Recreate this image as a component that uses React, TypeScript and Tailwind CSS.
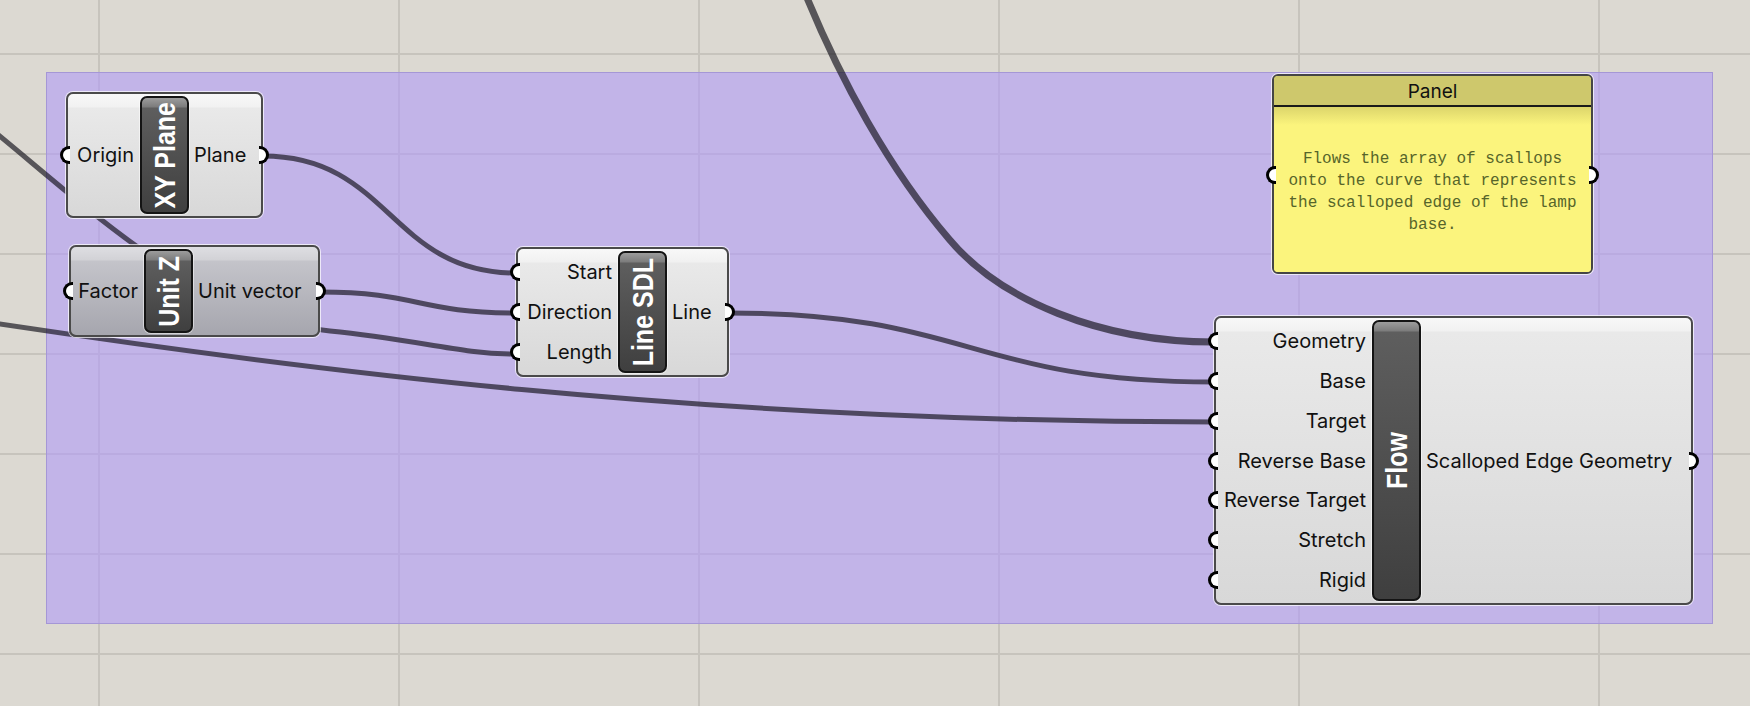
import React from "react"

type NodeProps = {
  x: number
  y: number
  w: number
  h: number
  leftW: number
  title: string
  inputs: string[]
  outputs: string[]
  dark?: boolean
}

const light =
  "bg-[linear-gradient(to_bottom,#f8f8f8_0px,#f1f1f1_13px,#e9e9e9_14px,#d8d8d8_100%)]"
const grey =
  "bg-[linear-gradient(to_bottom,#dedee2_0px,#d2d2d6_13px,#c4c4ca_14px,#a6a6ae_100%)]"

function InPort() {
  return (
    <span className="absolute right-full top-1/2 -translate-y-1/2 mr-[-2px] w-[10px] h-[18px] rounded-l-full border-[3px] border-r-0 border-black bg-white" />
  )
}

function OutPort() {
  return (
    <span className="absolute left-full top-1/2 -translate-y-1/2 ml-[-2px] w-[10px] h-[18px] rounded-r-full border-[3px] border-l-0 border-black bg-white" />
  )
}

function Node({ x, y, w, h, leftW, title, inputs, outputs, dark }: NodeProps) {
  return (
    <div
      className={`absolute flex rounded-[7px] border-2 border-[#4a4a4a] shadow-[0_0_0_1px_rgba(255,255,255,0.7)] ${dark ? grey : light}`}
      style={{ left: x, top: y, width: w, height: h }}
    >
      <div className="flex flex-col py-[3px]" style={{ width: leftW - 2 }}>
        {inputs.map((name) => (
          <div key={name} className="relative flex-1 flex items-center justify-end pr-[6px]">
            <InPort />
            <span className="text-[20px] leading-none text-[#111] whitespace-nowrap">{name}</span>
          </div>
        ))}
      </div>
      <div className="w-[49px] my-[2px] rounded-[7px] border-2 border-[#141414] shadow-[0_0_0_1px_rgba(255,255,255,0.5)] bg-[linear-gradient(to_bottom,#9c9c9c_0px,#7c7c7c_9px,#5e5e5e_10px,#3f3f3f_100%)] flex items-center justify-center overflow-hidden">
        <span className="[writing-mode:vertical-rl] rotate-180 scale-x-[1.18] font-['Liberation_Sans',Arial,sans-serif] font-bold text-[25px] leading-none text-white whitespace-nowrap">
          {title}
        </span>
      </div>
      <div className="flex-1 flex flex-col py-[3px]">
        {outputs.map((name) => (
          <div key={name} className="relative flex-1 flex items-center pl-[5px]">
            <span className="text-[20px] leading-none text-[#111] whitespace-nowrap">{name}</span>
          </div>
        ))}
      </div>
      <div className="absolute right-0 top-0 bottom-0 flex flex-col">
        <div className="relative flex-1">
          <OutPort />
        </div>
      </div>
    </div>
  )
}

const wire = "rgba(18,16,26,0.66)"

export default function App() {
  return (
    <div className="relative w-[1750px] h-[706px] overflow-hidden bg-[#dcd9d2] font-['Inter','Noto_Sans',sans-serif] bg-[linear-gradient(to_right,#c7c4bd_2px,transparent_2px),linear-gradient(to_bottom,#c7c4bd_2px,transparent_2px)] bg-[size:300px_100px] bg-[position:98px_53px]">
      {/* group */}
      <div className="absolute left-[46px] top-[72px] w-[1667px] h-[552px] bg-[rgba(176,155,247,0.6)] border border-[#a597d6]" />

      {/* wires */}
      <svg className="absolute inset-0 pointer-events-none" width="1750" height="706" fill="none">
        <path d="M 803 -12 C 840 80, 890 170, 949 239 C 1000 300, 1100 342, 1214 342" stroke={wire} strokeWidth="7" />
        <path d="M 263 156 C 390 156, 390 273, 516 273" stroke={wire} strokeWidth="5" />
        <path d="M 320 292 C 418 292, 418 313, 516 313" stroke={wire} strokeWidth="5" />
        <path d="M -20 120 C 80 200, 200 320, 330 331 C 420 340, 460 354, 516 354" stroke={wire} strokeWidth="5" />
        <path d="M -40 318 C 300 370, 700 422, 1214 422" stroke={wire} strokeWidth="5" />
        <path d="M 729 313 C 970 313, 970 382, 1214 382" stroke={wire} strokeWidth="5" />
      </svg>

      <Node x={66} y={92} w={197} h={126} leftW={74} title="XY Plane" inputs={["Origin"]} outputs={["Plane"]} />
      <Node x={69} y={245} w={251} h={92} leftW={75} title="Unit Z" inputs={["Factor"]} outputs={["Unit vector"]} dark />
      <Node x={516} y={247} w={213} h={130} leftW={102} title="Line SDL" inputs={["Start", "Direction", "Length"]} outputs={["Line"]} />
      <Node
        x={1214}
        y={316}
        w={479}
        h={289}
        leftW={158}
        title="Flow"
        inputs={["Geometry", "Base", "Target", "Reverse Base", "Reverse Target", "Stretch", "Rigid"]}
        outputs={["Scalloped Edge Geometry"]}
      />

      {/* panel */}
      <div className="absolute left-[1272px] top-[74px] w-[321px] h-[200px] flex flex-col rounded-[6px] border-2 border-[#454545] shadow-[0_0_0_1px_rgba(255,255,255,0.7)] bg-[#fbf47d]">
        <span className="absolute right-full top-[90px] mr-[-2px] w-[10px] h-[18px] rounded-l-full border-[3px] border-r-0 border-black bg-white" />
        <span className="absolute left-full top-[90px] ml-[-2px] w-[10px] h-[18px] rounded-r-full border-[3px] border-l-0 border-black bg-white" />
        <div className="h-[31px] shrink-0 pt-[3px] rounded-t-[4px] bg-[#cec86c] border-b-2 border-[#1a1a1a] flex items-center justify-center text-[19px] text-[#111]">
          Panel
        </div>
        <div className="flex-1 flex items-center justify-center px-[8px] pt-[4px] rounded-b-[4px] bg-[linear-gradient(to_bottom,#dcd56b_0px,#fbf47d_18px,#fbf47d_100%)]">
          <p className="font-['Liberation_Mono','Courier_New',monospace] text-[16px] leading-[22px] text-[#56652a] text-center">
            Flows the array of scallops onto the curve that represents the scalloped edge of the lamp base.
          </p>
        </div>
      </div>
    </div>
  )
}
